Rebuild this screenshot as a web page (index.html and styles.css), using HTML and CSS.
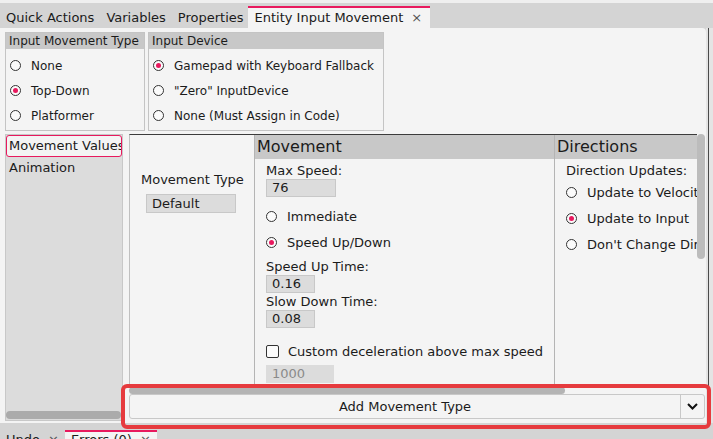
FILE: index.html
```html
<!DOCTYPE html>
<html>
<head>
<meta charset="utf-8">
<link rel="stylesheet" href="styles.css">
</head>
<body>
<div class="topstrip"></div>
<div class="tabbar">
  <div class="tab">Quick Actions</div>
  <div class="tab">Variables</div>
  <div class="tab">Properties</div>
  <div class="tab active">Entity Input Movement<span class="x">×</span></div>
</div>
<div class="workspace">
  <div class="main">
    <div class="groups">
      <div class="group g1">
        <div class="ghead">Input Movement Type</div>
        <div class="gbody">
          <div class="radio"><span class="dot"></span>None</div>
          <div class="radio on"><span class="dot"></span>Top-Down</div>
          <div class="radio"><span class="dot"></span>Platformer</div>
        </div>
      </div>
      <div class="group g2">
        <div class="ghead">Input Device</div>
        <div class="gbody">
          <div class="radio on"><span class="dot"></span>Gamepad with Keyboard Fallback</div>
          <div class="radio"><span class="dot"></span>"Zero" InputDevice</div>
          <div class="radio"><span class="dot"></span>None (Must Assign in Code)</div>
        </div>
      </div>
    </div>
    <div class="lower">
      <div class="list">
        <div class="item sel">Movement Values</div>
        <div class="item">Animation</div>
        <div class="lscroll"></div>
      </div>
      <div class="editor">
        <div class="viewrow">
          <div class="viewport">
            <div class="typecol">
              <div class="lbl">Movement Type</div>
              <div class="field default">Default</div>
            </div>
            <div class="sect movement">
              <div class="shead">Movement</div>
              <div class="sbody">
                <div class="lbl">Max Speed:</div>
                <div class="field w70">76</div>
                <div class="rows">
                  <div class="rrow"><span class="dot"></span>Immediate</div>
                  <div class="rrow on"><span class="dot"></span>Speed Up/Down</div>
                </div>
                <div class="lbl mt4">Speed Up Time:</div>
                <div class="field w49">0.16</div>
                <div class="lbl mt1">Slow Down Time:</div>
                <div class="field w49">0.08</div>
                <div class="crow"><span class="check"></span>Custom deceleration above max speed</div>
                <div class="field w68 disabled">1000</div>
              </div>
            </div>
            <div class="sect directions">
              <div class="shead">Directions</div>
              <div class="sbody">
                <div class="lbl">Direction Updates:</div>
                <div class="rrow"><span class="dot"></span>Update to Velocity</div>
                <div class="rrow on"><span class="dot"></span>Update to Input</div>
                <div class="rrow"><span class="dot"></span>Don't Change Direction</div>
              </div>
            </div>
          </div>
          <div class="vscroll"><div class="vthumb"></div></div>
        </div>
        <div class="hscroll"><div class="hthumb"></div></div>
        <div class="combo">
          <div class="combo-text">Add Movement Type</div>
          <div class="combo-btn">
            <svg width="11" height="7" viewBox="0 0 11 7"><polyline points="1,1 5.5,5.5 10,1" fill="none" stroke="#111" stroke-width="2"/></svg>
          </div>
        </div>
      </div>
    </div>
  </div>
  <div class="side"><div class="sideline"></div></div>
</div>
<div class="bottombar">
  <div class="btab">Undo<span class="x">×</span></div>
  <div class="btab active">Errors (0)<span class="x">×</span></div>
</div>
<div class="highlight"></div>
</body>
</html>
```
FILE: styles.css
```css
* { box-sizing: border-box; }
html, body { margin: 0; padding: 0; }
body {
  width: 713px;
  height: 439px;
  overflow: hidden;
  position: relative;
  background: #d4d4d4;
  font-family: "DejaVu Sans", Verdana, sans-serif;
  font-size: 13px;
  color: #1b1b1b;
}
.topstrip { height: 3px; background: #efefef; }
.tabbar {
  height: 25px;
  display: flex;
  align-items: flex-end;
  background: #d4d4d4;
}
.tab {
  height: 22px;
  border-top: 2px solid transparent;
  padding: 0 6px;
  line-height: 20px;
  font-size: 13px;
  white-space: nowrap;
}
.tab.active {
  background: #f4f4f4;
  border-top-color: #e8195e;
  padding: 0 8px 0 7px;
  margin-left: -2px;
}
.x { margin-left: 8px; color: #555; }

.workspace { display: flex; height: 395px; }
.main {
  width: 706px;
  flex: none;
  background: #f4f4f4;
  border-top-right-radius: 4px;
  display: flex;
  flex-direction: column;
}
.side { width: 7px; flex: none; display: flex; background: #e4e4e4; }
.sideline { width: 1px; margin-left: 2px; background: #4a4a4a; }

.groups { display: flex; gap: 3px; padding: 4px 0 0 5px; }
.group { border: 1px solid #c4c4c4; height: 99px; flex: none; }
.g1 { width: 140px; }
.g2 { width: 236px; }
.ghead {
  background: #c8c8c8;
  height: 16px;
  line-height: 16px;
  font-size: 12px;
  padding-left: 3px;
  white-space: nowrap;
}
.gbody { padding-top: 4px; }
.radio {
  display: flex;
  align-items: center;
  height: 25px;
  font-size: 12px;
  padding-left: 4px;
  white-space: nowrap;
}
.dot {
  width: 11px;
  height: 11px;
  border-radius: 50%;
  border: 1px solid #333;
  background: #fbfbfb;
  margin-right: 10px;
  display: flex;
  align-items: center;
  justify-content: center;
  flex: none;
}
.on .dot::after {
  content: "";
  width: 5px;
  height: 5px;
  border-radius: 50%;
  background: #e8195e;
}

.lower { display: flex; margin-top: 3px; padding-left: 5px; height: 287px; }
.list {
  width: 118px;
  flex: none;
  background: #dcdcdc;
  border: 1px solid #c8c8c8;
  display: flex;
  flex-direction: column;
  overflow: hidden;
}
.item {
  height: 22px;
  line-height: 20px;
  border: 1px solid transparent;
  padding-left: 2px;
  white-space: nowrap;
  overflow: hidden;
  flex: none;
}
.item.sel { border-color: #e8195e; border-radius: 3px; background: #f4f4f4; }
.lscroll {
  margin-top: auto;
  margin-bottom: 1px;
  height: 8px;
  width: 115px;
  border-radius: 4px;
  background: #ababab;
  flex: none;
}

.editor {
  flex: 1;
  min-width: 0;
  margin-left: 6px;
  margin-right: 1px;
  display: flex;
  flex-direction: column;
}
.viewrow { display: flex; height: 251px; }
.viewport {
  flex: 1;
  min-width: 0;
  border-top: 1px solid #3c3c3c;
  border-left: 1px solid #c0c0c0;
  display: flex;
  overflow: hidden;
}
.vscroll { width: 8px; flex: none; }
.vthumb { height: 125px; border-radius: 4px; background: #bcbcbc; }

.typecol { width: 124px; flex: none; padding: 37px 0 0 11px; }
.lbl { line-height: 16px; white-space: nowrap; }
.mt4 { margin-top: 4px; }
.mt1 { margin-top: 1px; }
.field {
  height: 18px;
  border: 1px solid #c8c8c8;
  background: #dcdcdc;
  line-height: 16px;
  padding-left: 5px;
}
.default { margin: 6px 0 0 5px; width: 90px; height: 19px; line-height: 17px; }
.w70 { width: 70px; }
.w49 { width: 49px; }
.w68 { width: 68px; margin-top: 4px; }
.disabled { color: #8a8a8a; border-color: #dcdcdc; }

.sect { border-left: 1px solid #b4b4b4; display: flex; flex-direction: column; flex: none; }
.movement { width: 300px; }
.directions { width: 200px; }
.shead {
  height: 24px;
  line-height: 24px;
  background: #c8c8c8;
  font-size: 16px;
  padding-left: 2px;
  white-space: nowrap;
}
.sbody { padding: 4px 0 0 11px; }
.rows { margin-top: 6px; }
.rrow { display: flex; align-items: center; height: 26px; white-space: nowrap; }
.crow { display: flex; align-items: center; height: 20px; margin-top: 13px; white-space: nowrap; }
.check {
  width: 13px;
  height: 13px;
  border: 1px solid #333;
  border-radius: 2px;
  background: #fbfbfb;
  margin-right: 9px;
  flex: none;
}

.hscroll { height: 9px; padding-top: 2px; }
.hthumb { width: 436px; height: 7px; border-radius: 3.5px; background: #b4b4b4; }
.combo {
  height: 25px;
  border: 1px solid #c8c8c8;
  border-radius: 3px;
  background: #f4f4f4;
  display: flex;
}
.combo-text { flex: 1; text-align: center; line-height: 23px; }
.combo-btn {
  width: 24px;
  border-left: 1px solid #c8c8c8;
  display: flex;
  align-items: center;
  justify-content: center;
}

.bottombar { height: 16px; padding-top: 7px; display: flex; overflow: hidden; }
.btab {
  border-top: 2px solid transparent;
  padding: 0 6px;
  line-height: 16px;
  height: 20px;
  white-space: nowrap;
}
.btab.active { background: #f4f4f4; border-top-color: #e8195e; }

.highlight {
  position: absolute;
  left: 121px;
  top: 384px;
  width: 590px;
  height: 45px;
  border: 4px solid #e63b3e;
  border-radius: 6px;
}
```
